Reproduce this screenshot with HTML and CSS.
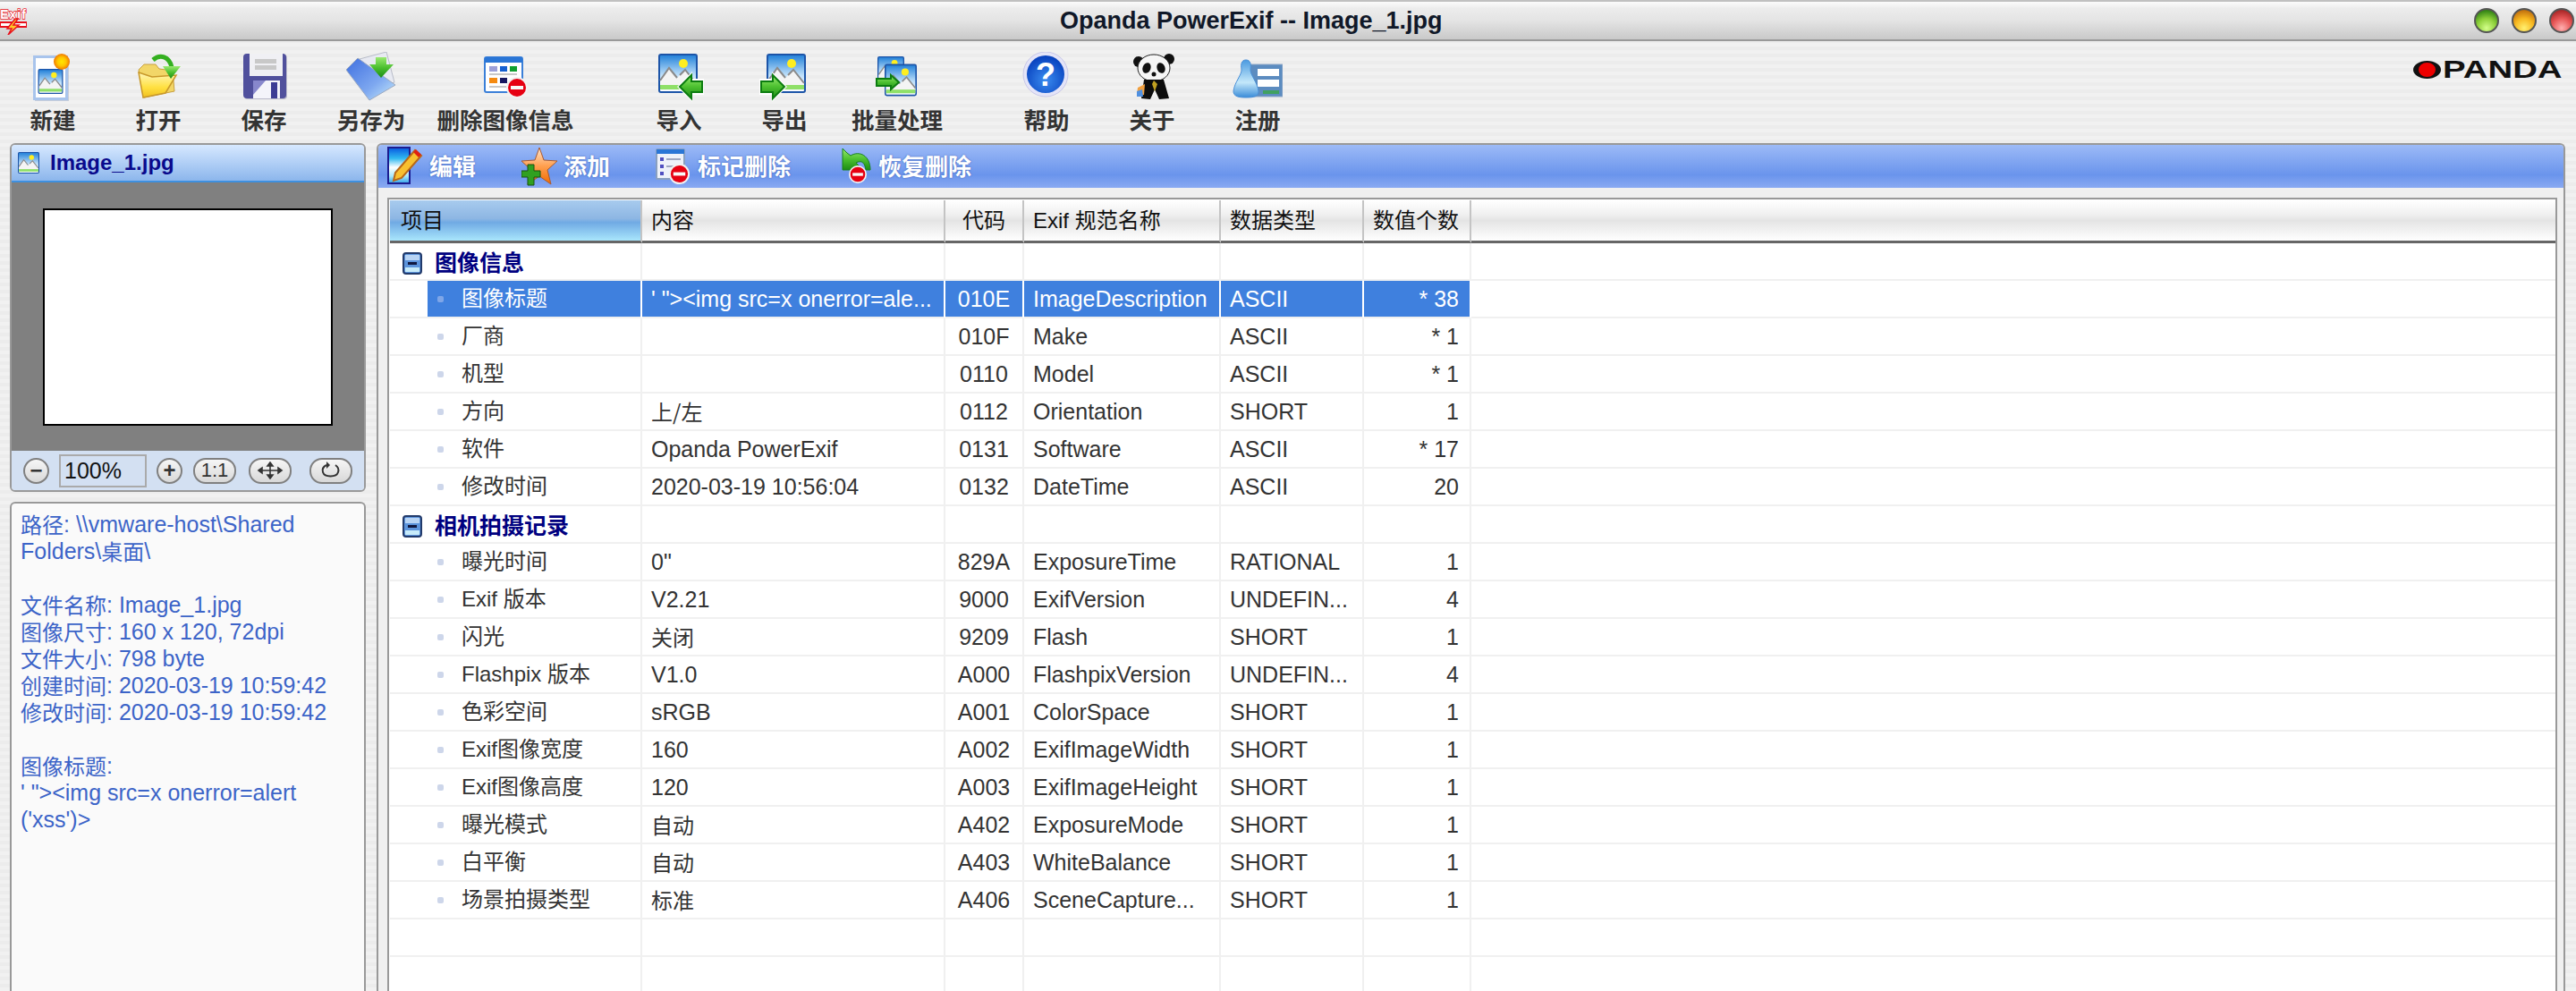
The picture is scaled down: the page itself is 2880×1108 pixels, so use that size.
FILE: index.html
```html
<!DOCTYPE html>
<html lang="zh">
<head>
<meta charset="utf-8">
<title>Opanda PowerExif -- Image_1.jpg</title>
<link rel="stylesheet" href="styles.css">
</head>
<body>
<svg class="defs" aria-hidden="true">
  <defs>
    <linearGradient id="sky" x1="0" y1="0" x2="0" y2="1"><stop offset="0" stop-color="#1f7fd8"/><stop offset=".55" stop-color="#bfe0fa"/><stop offset="1" stop-color="#fff"/></linearGradient>
    <linearGradient id="grn" x1="0" y1="0" x2="0" y2="1"><stop offset="0" stop-color="#9aea70"/><stop offset=".5" stop-color="#4cc030"/><stop offset="1" stop-color="#1c8c14"/></linearGradient>
    <linearGradient id="fold" x1="0" y1="0" x2="0" y2="1"><stop offset="0" stop-color="#fff6b8"/><stop offset=".6" stop-color="#ffe040"/><stop offset="1" stop-color="#f0c020"/></linearGradient>
    <linearGradient id="disk" x1="0" y1="0" x2="1" y2="1"><stop offset="0" stop-color="#3f6fe0"/><stop offset=".6" stop-color="#7ea8f0"/><stop offset="1" stop-color="#c8ecfc"/></linearGradient>
    <linearGradient id="star" x1="0" y1="0" x2="0" y2="1"><stop offset="0" stop-color="#ffe6d0"/><stop offset=".5" stop-color="#ffa050"/><stop offset="1" stop-color="#f06a00"/></linearGradient>
    <linearGradient id="note" x1="0" y1="0" x2="0" y2="1"><stop offset="0" stop-color="#0858e0"/><stop offset=".3" stop-color="#30b8f0"/><stop offset=".55" stop-color="#fff"/><stop offset=".8" stop-color="#a8e8fc"/><stop offset="1" stop-color="#30a0e8"/></linearGradient>
    <radialGradient id="sun"><stop offset="0" stop-color="#ffe800"/><stop offset=".55" stop-color="#ffc400"/><stop offset="1" stop-color="#f07800"/></radialGradient>
    <radialGradient id="hlp" cx=".5" cy=".65" r=".6"><stop offset="0" stop-color="#3a8cf0"/><stop offset="1" stop-color="#0a44c0"/></radialGradient>
    <linearGradient id="pers" x1="0" y1="0" x2="0" y2="1"><stop offset="0" stop-color="#4a9ae0"/><stop offset=".6" stop-color="#c4e8fa"/><stop offset="1" stop-color="#3a8cd8"/></linearGradient>
    <symbol id="pic" viewBox="0 0 44 44">
      <rect x="1" y="1" width="42" height="42" rx="2" fill="url(#sky)" stroke="#1c54a8" stroke-width="2"/>
      <circle cx="28" cy="11" r="5" fill="#ffee20"/>
      <path d="M2 30 12 16 21 27 30 18 42 33V36H2Z" fill="#f4f4f4"/>
      <path d="M2 30 12 16 21 27M24 24 30 18 42 33" fill="none" stroke="#8a8a8a" stroke-width="2"/>
      <rect x="2" y="35" width="40" height="5" fill="#8fe068"/>
    </symbol>
    <symbol id="stop" viewBox="0 0 24 24">
      <circle cx="12" cy="12" r="12" fill="#f2f2f2"/>
      <circle cx="12" cy="12" r="10" fill="#e60012"/>
      <rect x="5" y="10" width="14" height="4" fill="#f8f8f8"/>
    </symbol>
    <symbol id="tb-new" viewBox="0 0 56 56">
      <rect x="8" y="8" width="38" height="47" fill="#8a9ab8" opacity=".4"/>
      <rect x="7.5" y="5.5" width="36" height="47" fill="#fff" stroke="#a8c4ec" stroke-width="3"/>
      <use href="#pic" x="11" y="19" width="29" height="28"/>
      <circle cx="38" cy="11" r="9" fill="url(#sun)"/>
    </symbol>
    <symbol id="tb-open" viewBox="0 0 56 56">
      <path d="M6 20 12 14H25L29 19 44 21 46 44 12 51Z" fill="#f2d668" stroke="#c8a040"/>
      <path d="M6 23 21 28 48 26 36 46 11 51Z" fill="url(#fold)" stroke="#c8982a" stroke-width="1.5"/>
      <path d="M22 9C30 2 40 5 43 17" fill="none" stroke="#34b020" stroke-width="5"/>
      <path d="M33 16H53L42 30Z" fill="url(#grn)"/>
    </symbol>
    <symbol id="tb-save" viewBox="0 0 56 56">
      <rect x="6" y="3" width="48" height="50" rx="4" fill="#8888a8" opacity=".5"/>
      <rect x="5" y="2" width="48" height="50" rx="4" fill="#50509c"/>
      <rect x="12" y="2" width="37" height="25" fill="#f0f0f4"/>
      <rect x="18" y="8" width="24" height="5" fill="#c8c8c8"/>
      <rect x="18" y="15" width="24" height="5" fill="#c8c8c8"/>
      <rect x="16" y="32" width="30" height="20" fill="#f4f4fa"/>
      <path d="M16 32H30L16 48Z" fill="#8888cc"/>
      <rect x="36" y="34" width="7" height="18" fill="#3c3c94"/>
    </symbol>
    <symbol id="tb-saveas" viewBox="0 0 56 56">
      <path d="M15 8 45 0 54 34 30 42Z" fill="#e8eaf2" stroke="#b8bcc8"/>
      <path d="M0 20 13 7 55 37 26 54Z" fill="url(#disk)" stroke="#9aa8c0"/>
      <path d="M33 6H45V14H53L39 29 26 14H33Z" fill="url(#grn)"/>
    </symbol>
    <symbol id="tb-del" viewBox="0 0 56 56">
      <rect x="5" y="6" width="42" height="39" rx="2" fill="#fff" stroke="#3a7fd8" stroke-width="2"/>
      <rect x="5" y="6" width="42" height="6" fill="#2a76d6"/>
      <rect x="10" y="16" width="9" height="6" fill="#9da0d8"/><rect x="22" y="16" width="8" height="6" fill="#1560d0"/><rect x="33" y="16" width="8" height="6" fill="#10a030"/>
      <rect x="10" y="24" width="31" height="2" fill="#c8c8c8"/>
      <rect x="10" y="29" width="9" height="6" fill="#f58a10"/><rect x="22" y="29" width="8" height="6" fill="#181860"/>
      <rect x="10" y="38" width="20" height="2" fill="#c8c8c8"/>
      <use href="#stop" x="29" y="28" width="24" height="24"/>
    </symbol>
    <symbol id="tb-import" viewBox="0 0 56 56">
      <use href="#pic" x="5" y="2" width="44" height="44"/>
      <path d="M26 39 43 22V30H56V48H43V56Z" fill="#fff"/>
      <path d="M29 39 42 26V33H54V45H42V52Z" fill="url(#grn)" stroke="#0c7c10" stroke-width="2"/>
    </symbol>
    <symbol id="tb-export" viewBox="0 0 56 56">
      <use href="#pic" x="8" y="2" width="44" height="44"/>
      <path d="M31 39 14 22V30H0V48H14V56Z" fill="#fff"/>
      <path d="M28 39 15 26V33H2V45H15V52Z" fill="url(#grn)" stroke="#0c7c10" stroke-width="2"/>
    </symbol>
    <symbol id="tb-batch" viewBox="0 0 56 56">
      <use href="#pic" x="6" y="4" width="30" height="32"/>
      <use href="#pic" x="14" y="13" width="36" height="37"/>
      <path d="M30 34 21 26V30H5V38H21V42Z" fill="url(#grn)" stroke="#0c7c10" stroke-width="2"/>
    </symbol>
    <symbol id="tb-help" viewBox="0 0 56 56">
      <circle cx="27" cy="25" r="25" fill="#e4e4f8" stroke="#c8c8e8"/>
      <circle cx="27" cy="25" r="21" fill="url(#hlp)"/>
      <text x="27" y="38" text-anchor="middle" class="qmark">?</text>
    </symbol>
    <symbol id="tb-about" viewBox="0 0 56 56">
      <circle cx="13" cy="11" r="6" fill="#111"/><circle cx="47" cy="8" r="6" fill="#111"/>
      <ellipse cx="30" cy="18" rx="18" ry="15" fill="#f6f6f6" stroke="#222" stroke-width="1"/>
      <ellipse cx="22" cy="18" rx="4.5" ry="6" fill="#111" transform="rotate(20 22 18)"/>
      <ellipse cx="38" cy="18" rx="4.5" ry="6" fill="#111" transform="rotate(-20 38 18)"/>
      <circle cx="30" cy="25" r="2.5" fill="#111"/>
      <path d="M19 31H41L47 52 36 53 31 42 26 53 16 52Z" fill="#0c0c0c"/>
      <path d="M30 32 34 36 31 44 28 36Z" fill="#c0a020"/>
      <path d="M12 40 20 36 19 48 11 48Z" fill="#f0a040"/><path d="M11 44 17 42 18 50 11 50Z" fill="#5090e0"/>
    </symbol>
    <symbol id="tb-reg" viewBox="0 0 56 56">
      <rect x="14" y="14" width="42" height="36" fill="#5c8cc0" stroke="#90a8c8"/>
      <rect x="28" y="19" width="24" height="8" fill="#fff"/><rect x="28" y="31" width="24" height="8" fill="#fff"/>
      <rect x="34" y="43" width="18" height="4" fill="#40a060"/>
      <path d="M15 9C10 9 9 14 10 19 11 25 2 34 1 44 1 50 7 51 15 51 24 51 29 50 29 44 28 34 19 25 20 19 21 14 20 9 15 9Z" fill="url(#pers)" stroke="#4a90d8"/>
    </symbol>
    <symbol id="sm-edit" viewBox="0 0 40 44">
      <rect x="1" y="1" width="24" height="40" fill="url(#note)" stroke="#1c1c90" stroke-width="2"/>
      <path d="M7 38 9 29 31 4 38 10 16 35Z" fill="#f8c030" stroke="#b86818" stroke-width="2"/>
      <path d="M29 6 32 3 38 9 35 12Z" fill="#e02010"/>
    </symbol>
    <symbol id="sm-add" viewBox="0 0 40 44">
      <path d="M20 1 25 15 40 16 29 26 33 42 20 33 7 42 11 26 0 16 15 15Z" fill="url(#star)" stroke="#a85a30"/>
      <path d="M7 20H14V27H21V34H14V43H7V34H0V27H7Z" fill="#30a020" stroke="#185010"/>
    </symbol>
    <symbol id="sm-mark" viewBox="0 0 40 44">
      <rect x="1" y="3" width="31" height="33" rx="1" fill="#eef2fa" stroke="#8aa0c0" stroke-width="2"/>
      <rect x="1" y="3" width="31" height="5" fill="#2a76d6"/>
      <rect x="5" y="12" width="4" height="4" fill="#5050c0"/><rect x="12" y="13" width="16" height="2" fill="#a0a8c0"/>
      <rect x="5" y="20" width="4" height="4" fill="#5050c0"/><rect x="12" y="21" width="10" height="2" fill="#a0a8c0"/>
      <rect x="5" y="28" width="4" height="4" fill="#5050c0"/>
      <use href="#stop" x="15" y="19" width="23" height="23"/>
    </symbol>
    <symbol id="sm-restore" viewBox="0 0 40 44">
      <path d="M7 2V26H30L22 18C30 14 32 20 33 26H38C38 10 26 4 16 10L12 7Z" fill="url(#grn)" stroke="#188020"/>
      <use href="#stop" x="14" y="21" width="20" height="20"/>
    </symbol>
  </defs>
</svg>

<div class="app">
  <header class="titlebar">
    <svg class="appicon" viewBox="0 0 30 30" aria-hidden="true">
      <text x="15" y="12" text-anchor="middle" class="appicon-t">Exif</text>
      <rect x="0" y="16" width="30" height="5" fill="#fff" stroke="#e8101c" stroke-width="2"/>
      <path d="M17 12 8 23H13L9 30 21 19H15L20 12Z" fill="#ffc828" stroke="#e8101c" stroke-width="1.5"/>
    </svg>
    <div class="title">Opanda PowerExif -- Image_1.jpg</div>
    <div class="lights">
      <span class="light green"></span>
      <span class="light orange"></span>
      <span class="light red"></span>
    </div>
  </header>

  <nav class="toolbar">
    <div class="tgroup">
      <div class="titem"><svg class="ticon"><use href="#tb-new"/></svg><span>新建</span></div>
      <div class="titem"><svg class="ticon"><use href="#tb-open"/></svg><span>打开</span></div>
      <div class="titem"><svg class="ticon"><use href="#tb-save"/></svg><span>保存</span></div>
      <div class="titem w122"><svg class="ticon"><use href="#tb-saveas"/></svg><span>另存为</span></div>
      <div class="titem w178"><svg class="ticon"><use href="#tb-del"/></svg><span>删除图像信息</span></div>
    </div>
    <div class="tgroup g2">
      <div class="titem"><svg class="ticon"><use href="#tb-import"/></svg><span>导入</span></div>
      <div class="titem"><svg class="ticon"><use href="#tb-export"/></svg><span>导出</span></div>
      <div class="titem w134"><svg class="ticon"><use href="#tb-batch"/></svg><span>批量处理</span></div>
    </div>
    <div class="tgroup g3">
      <div class="titem"><svg class="ticon"><use href="#tb-help"/></svg><span>帮助</span></div>
      <div class="titem"><svg class="ticon"><use href="#tb-about"/></svg><span>关于</span></div>
      <div class="titem"><svg class="ticon"><use href="#tb-reg"/></svg><span>注册</span></div>
    </div>
    <div class="logo"><span class="logo-o"></span><span class="logo-t">PANDA</span></div>
  </nav>

  <main class="main">
    <aside class="side">
      <section class="preview">
        <div class="phead">
          <svg class="phead-ic"><use href="#pic"/></svg>
          <span>Image_1.jpg</span>
        </div>
        <div class="stage"><div class="photo"></div></div>
        <div class="controls">
          <button class="rb">−</button>
          <div class="zoomval">100%</div>
          <button class="rb">+</button>
          <button class="pill txt">1:1</button>
          <button class="pill mov">
            <svg class="pill-ic" viewBox="0 0 28 20"><path d="M1 10H27M14 1V19M1 10 5 7V13ZM27 10 23 7V13ZM14 1 11 5H17ZM14 19 11 15H17Z" fill="#333" stroke="#333" stroke-width="1.6"/></svg>
          </button>
          <button class="pill rot">
            <svg class="pill-ic" viewBox="0 0 28 20"><path d="M9 4C5 6 4 9 5 12 7 18 20 18 22 12 23 9 22 6 19 4" fill="none" stroke="#333" stroke-width="2"/><path d="M9 0V8L13 4Z" fill="#333"/></svg>
          </button>
        </div>
      </section>
      <section class="info">
        <p><span class="zh">路径</span>: \\vmware-host\Shared<br>Folders\<span class="zh">桌面</span>\</p>
        <p><span class="zh">文件名称</span>: Image_1.jpg<br><span class="zh">图像尺寸</span>: 160 x 120, 72dpi<br><span class="zh">文件大小</span>: 798 byte<br><span class="zh">创建时间</span>: 2020-03-19 10:59:42<br><span class="zh">修改时间</span>: 2020-03-19 10:59:42</p>
        <p><span class="zh">图像标题</span>:<br>' "&gt;&lt;img src=x onerror=alert<br>('xss')&gt;</p>
      </section>
    </aside>

    <section class="content">
      <div class="chead">
        <div class="citem"><svg class="cicon"><use href="#sm-edit"/></svg><span>编辑</span></div>
        <div class="citem"><svg class="cicon"><use href="#sm-add"/></svg><span>添加</span></div>
        <div class="citem"><svg class="cicon"><use href="#sm-mark"/></svg><span>标记删除</span></div>
        <div class="citem"><svg class="cicon"><use href="#sm-restore"/></svg><span>恢复删除</span></div>
      </div>
      <div class="cbody">
        <div class="frame">
          <table class="grid">
            <colgroup>
              <col class="c1"><col class="c2"><col class="c3"><col class="c4"><col class="c5"><col class="c6"><col>
            </colgroup>
            <thead>
              <tr><th class="on">项目</th><th>内容</th><th class="ctr">代码</th><th>Exif 规范名称</th><th>数据类型</th><th>数值个数</th><th></th></tr>
            </thead>
            <tbody>
              <tr class="grp"><td class="gname"><svg class="minus" viewBox="0 0 22 25"><rect x="1" y="1" width="20" height="23" rx="3" fill="#5c94dc" stroke="#223a6a" stroke-width="2"/><rect x="3" y="3" width="16" height="6" fill="#b8d4f4"/><rect x="3" y="17" width="16" height="5" fill="#c8ecfa"/><rect x="6" y="11" width="10" height="3" fill="#101840"/></svg><span>图像信息</span></td><td></td><td></td><td></td><td></td><td></td><td></td></tr>
              <tr class="sel"><td class="name">图像标题</td><td>' "&gt;&lt;img src=x onerror=ale...</td><td class="ctr">010E</td><td>ImageDescription</td><td>ASCII</td><td class="num">* 38</td><td></td></tr>
              <tr><td class="name">厂商</td><td></td><td class="ctr">010F</td><td>Make</td><td>ASCII</td><td class="num">* 1</td><td></td></tr>
              <tr><td class="name">机型</td><td></td><td class="ctr">0110</td><td>Model</td><td>ASCII</td><td class="num">* 1</td><td></td></tr>
              <tr><td class="name">方向</td><td class="cn">上/左</td><td class="ctr">0112</td><td>Orientation</td><td>SHORT</td><td class="num">1</td><td></td></tr>
              <tr><td class="name">软件</td><td>Opanda PowerExif</td><td class="ctr">0131</td><td>Software</td><td>ASCII</td><td class="num">* 17</td><td></td></tr>
              <tr><td class="name">修改时间</td><td>2020-03-19 10:56:04</td><td class="ctr">0132</td><td>DateTime</td><td>ASCII</td><td class="num">20</td><td></td></tr>
              <tr class="grp"><td class="gname"><svg class="minus" viewBox="0 0 22 25"><rect x="1" y="1" width="20" height="23" rx="3" fill="#5c94dc" stroke="#223a6a" stroke-width="2"/><rect x="3" y="3" width="16" height="6" fill="#b8d4f4"/><rect x="3" y="17" width="16" height="5" fill="#c8ecfa"/><rect x="6" y="11" width="10" height="3" fill="#101840"/></svg><span>相机拍摄记录</span></td><td></td><td></td><td></td><td></td><td></td><td></td></tr>
              <tr><td class="name">曝光时间</td><td>0"</td><td class="ctr">829A</td><td>ExposureTime</td><td>RATIONAL</td><td class="num">1</td><td></td></tr>
              <tr><td class="name">Exif 版本</td><td>V2.21</td><td class="ctr">9000</td><td>ExifVersion</td><td>UNDEFIN...</td><td class="num">4</td><td></td></tr>
              <tr><td class="name">闪光</td><td class="cn">关闭</td><td class="ctr">9209</td><td>Flash</td><td>SHORT</td><td class="num">1</td><td></td></tr>
              <tr><td class="name">Flashpix 版本</td><td>V1.0</td><td class="ctr">A000</td><td>FlashpixVersion</td><td>UNDEFIN...</td><td class="num">4</td><td></td></tr>
              <tr><td class="name">色彩空间</td><td>sRGB</td><td class="ctr">A001</td><td>ColorSpace</td><td>SHORT</td><td class="num">1</td><td></td></tr>
              <tr><td class="name">Exif图像宽度</td><td>160</td><td class="ctr">A002</td><td>ExifImageWidth</td><td>SHORT</td><td class="num">1</td><td></td></tr>
              <tr><td class="name">Exif图像高度</td><td>120</td><td class="ctr">A003</td><td>ExifImageHeight</td><td>SHORT</td><td class="num">1</td><td></td></tr>
              <tr><td class="name">曝光模式</td><td class="cn">自动</td><td class="ctr">A402</td><td>ExposureMode</td><td>SHORT</td><td class="num">1</td><td></td></tr>
              <tr><td class="name">白平衡</td><td class="cn">自动</td><td class="ctr">A403</td><td>WhiteBalance</td><td>SHORT</td><td class="num">1</td><td></td></tr>
              <tr><td class="name">场景拍摄类型</td><td class="cn">标准</td><td class="ctr">A406</td><td>SceneCapture...</td><td>SHORT</td><td class="num">1</td><td></td></tr>
              <tr class="blank"><td></td><td></td><td></td><td></td><td></td><td></td><td></td></tr>
              <tr class="blank"><td></td><td></td><td></td><td></td><td></td><td></td><td></td></tr>
            </tbody>
          </table>
        </div>
      </div>
    </section>
  </main>
</div>
</body>
</html>
```
FILE: styles.css
```css
* { box-sizing: border-box; }
html, body { margin: 0; padding: 0; height: 100%; overflow: hidden; }
body {
  font-family: "Liberation Sans", "Noto Sans CJK SC", sans-serif;
  font-size: 25px;
  color: #222;
  background: repeating-linear-gradient(#f1f1f1 0 4px, #ececec 4px 8px);
}
.defs { position: absolute; width: 0; height: 0; }
.zh { display: inline-block; line-height: 30px; height: 30px; vertical-align: top; font-family: "Noto Sans CJK SC", sans-serif; font-size: 24px; }
.cn { font-family: "Noto Sans CJK SC", sans-serif; font-size: 24px; }
.qmark { font: bold 36px "Liberation Sans", sans-serif; fill: #fff; }

.app { height: 1108px; display: flex; flex-direction: column; overflow: hidden; }

/* title bar */
.titlebar {
  height: 46px;
  flex: none;
  display: flex;
  align-items: center;
  padding-right: 2px;
  background: linear-gradient(#fbfbfb 0, #ececec 18%, #e4e4e4 50%, #c9c9c9 100%);
  border-top: 2px solid #c0c0c0;
  border-bottom: 2px solid #999;
}
.appicon { width: 30px; height: 30px; flex: none; margin-top: 2px; }
.appicon-t { font: bold 14px "Liberation Sans", sans-serif; fill: #fff; stroke: #e8101c; stroke-width: 1.4px; paint-order: stroke; letter-spacing: 1px; }
.title { margin-left: 1155px; font-size: 27px; font-weight: bold; color: #101828; line-height: 40px; white-space: nowrap; }
.lights { margin-left: auto; display: flex; gap: 14px; }
.light { width: 28px; height: 28px; border-radius: 50%; border: 2px solid #555; }
.green { background: radial-gradient(circle at 50% 85%, #d4ff8a 0, #8ed03a 45%, #3a8a18 80%, #2c5a20 100%); }
.orange { background: radial-gradient(circle at 50% 85%, #fff070 0, #f8b820 45%, #c87810 80%, #6c4a20 100%); }
.red { background: radial-gradient(circle at 50% 85%, #ffb0b0 0, #e85858 45%, #b02c2c 80%, #6a2828 100%); }

/* main toolbar */
.toolbar { height: 114px; flex: none; display: flex; padding-top: 12px; }
.tgroup { display: flex; align-items: flex-start; }
.g2 { margin-left: 46px; }
.g3 { margin-left: 41px; }
.titem { width: 118px; display: flex; flex-direction: column; align-items: center; font-weight: bold; font-size: 25.5px; color: #333; font-family: "Noto Sans CJK SC", sans-serif; line-height: 30px; }
.w122 { width: 122px; }
.w134 { width: 134px; }
.w178 { width: 178px; }
.ticon { width: 56px; height: 56px; display: block; margin-bottom: 4px; flex: none; }
.logo { margin-left: auto; margin-top: 10px; margin-right: 12px; height: 20px; display: flex; align-items: center; width: 170px; }
.logo-o { width: 31px; height: 20px; border-radius: 50%; background: #e00; border-style: solid; border-color: #111; border-width: 2px 6px; flex: none; }
.logo-t { font-size: 28px; font-weight: bold; line-height: 20px; color: #111; transform: scaleX(1.37); transform-origin: left center; margin-left: 2px; display: inline-block; }

/* layout */
.main { flex: 1; display: flex; gap: 12px; padding: 0 12px 0 11px; min-height: 0; }
.side { width: 398px; flex: none; display: flex; flex-direction: column; gap: 11px; }

/* preview */
.preview { height: 390px; flex: none; border: 2px solid #999; border-radius: 6px; overflow: hidden; display: flex; flex-direction: column; }
.phead { height: 42px; flex: none; display: flex; align-items: center; gap: 12px; padding-left: 7px; color: #0a0a8c; font-size: 24px; font-weight: bold; background: linear-gradient(#d6e8ff, #8cb6ec); border-bottom: 2px solid #3e90e0; }
.phead-ic { width: 24px; height: 24px; flex: none; }
.stage { height: 300px; flex: none; background: #808080; display: flex; align-items: center; justify-content: center; }
.photo { width: 324px; height: 243px; background: #fff; border: 2px solid #000; }
.controls { flex: 1; background: #d3e0f2; display: flex; align-items: center; gap: 11px; padding-left: 13px; }
.rb, .pill { height: 29px; padding: 0; border: 2px solid #808080; background: linear-gradient(#f6f6f6, #d8d8d8); color: #333; font: bold 24px/24px "Liberation Sans", sans-serif; display: flex; align-items: center; justify-content: center; flex: none; }
.rb { width: 29px; border-radius: 50%; }
.pill { width: 48px; border-radius: 14px; }
.pill.txt { font: 22px/24px "Liberation Sans", sans-serif; margin-left: 1px; }
.mov { margin-left: 3px; }
.rot { margin-left: 9px; }
.pill-ic { width: 30px; height: 20px; }
.zoomval { width: 98px; height: 37px; border: 2px solid #aaa; padding-left: 4px; line-height: 33px; color: #111; }

/* info */
.info { flex: 1; background: #fafafa; border: 2px solid #999; border-bottom: 0; border-radius: 6px 6px 0 0; padding: 8px 11px 0 10px; color: #3c64c8; line-height: 30px; }
.info p { margin: 0 0 30px; }

/* right */
.content { flex: 1; min-width: 0; border: 2px solid #999; border-bottom: 0; border-radius: 6px 6px 0 0; display: flex; flex-direction: column; overflow: hidden; background: #f0f0f0; }
.chead { height: 48px; flex: none; display: flex; align-items: center; gap: 51px; padding-left: 10px; background: linear-gradient(#9cbaf7 0, #6a94ec 70%, #8aaaf2 100%); }
.citem { display: flex; align-items: center; gap: 7px; color: #fff; font-size: 26px; font-weight: bold; font-family: "Noto Sans CJK SC", sans-serif; line-height: 30px; text-shadow: 0 0 2px #3a5cb0; }
.citem span { padding-bottom: 3px; }
.cicon { width: 40px; height: 44px; flex: none; }
.cbody { flex: 1; min-height: 0; padding: 11px 7px 0 10px; }
.frame { height: 100%; border: 2px solid #999; border-bottom: 0; padding: 1px 0 0 1px; background: #fff; overflow: hidden; }

.grid { border-collapse: separate; border-spacing: 0; table-layout: fixed; width: 100%; }
.c1 { width: 282px; } .c2 { width: 339px; } .c3 { width: 88px; } .c4 { width: 220px; } .c5 { width: 160px; } .c6 { width: 120px; }
.grid th { height: 48px; padding: 0 10px 5px; text-align: left; font-weight: normal; font-size: 24px; color: #111; background: linear-gradient(#fff 0, #f0f0f0 35%, #e4e4e4 50%, #f4f4f4 80%, #fff 100%); border-right: 2px solid #c4c4c4; border-bottom: 3px solid #666; white-space: nowrap; }
.grid th:last-child { border-right: 0; }
.grid th.on { padding-left: 12px; background: linear-gradient(#a8cbee 0, #8db6e3 45%, #70aae4 55%, #a9e6fc 100%); }
.grid td { height: 42px; padding: 0 10px; border-right: 2px solid #f0f0f0; border-bottom: 2px solid #f0f0f0; white-space: nowrap; overflow: hidden; color: #333; line-height: 30px; }
.grid td:last-child { border-right: 0; }
.grid .ctr { text-align: center; padding-left: 0; padding-right: 0; }
.grid .num { text-align: right; padding-right: 12px; }
.grid .cn { font-family: "Noto Sans CJK SC", sans-serif; font-size: 24px; }
.grid .name { position: relative; padding-left: 80px; font-size: 24px; }
.grid .name::before { content: ""; position: absolute; left: 53px; top: 17px; width: 7px; height: 7px; border-radius: 2px; background: #cdd6ea; }
.grid .gname { padding-left: 14px; color: #000080; font-weight: bold; font-family: "Noto Sans CJK SC", sans-serif; }
.gname span { margin-left: 14px; vertical-align: middle; position: relative; top: -2px; }
.minus { width: 22px; height: 25px; vertical-align: middle; }
.sel td { background: #3f80de; color: #fff; border-right-color: #fff; }
.sel td:first-child { background: linear-gradient(to right, #fff 42px, #3f80de 42px); color: #fff; }
.sel td:last-child { background: #fff; }
.sel .name::before { background: #7fa6e8; }
```
